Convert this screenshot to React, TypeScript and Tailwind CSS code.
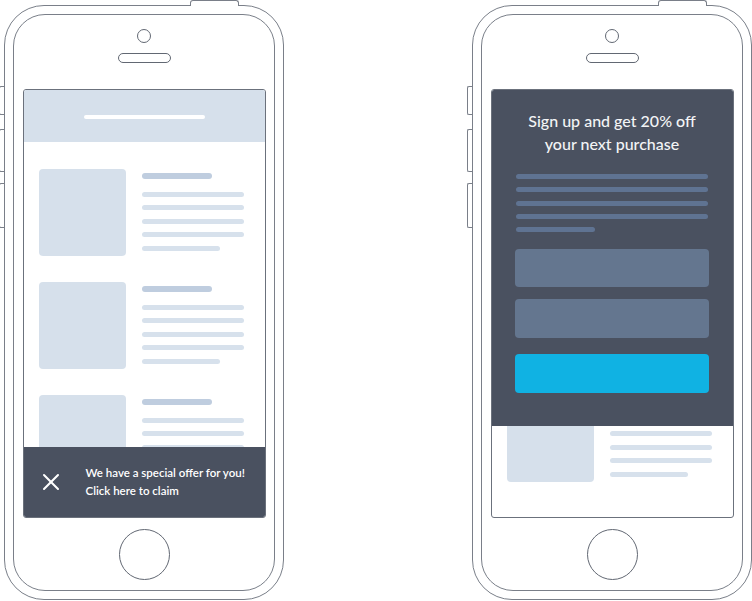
import { X } from "lucide-react";

function ListItem() {
  return (
    <div className="flex gap-[16px]">
      <div className="h-[87px] w-[87px] shrink-0 rounded-[4px] bg-[#d6e0eb]" />
      <div className="flex flex-col pt-[4px]">
        <div className="h-[6px] w-[70px] rounded-full bg-[#bfcddf]" />
        <div className="mt-[13px] flex flex-col gap-[8.4px]">
          <div className="h-[5px] w-[102px] rounded-full bg-[#d7e1ec]" />
          <div className="h-[5px] w-[102px] rounded-full bg-[#d7e1ec]" />
          <div className="h-[5px] w-[102px] rounded-full bg-[#d7e1ec]" />
          <div className="h-[5px] w-[102px] rounded-full bg-[#d7e1ec]" />
          <div className="h-[5px] w-[78px] rounded-full bg-[#d7e1ec]" />
        </div>
      </div>
    </div>
  );
}

function ScreenContent() {
  return (
    <>
      <div className="flex h-[52px] shrink-0 items-start justify-center bg-[#d6e0eb] pt-[25px]">
        <div className="h-[4px] w-[121px] rounded-full bg-white" />
      </div>
      <div className="flex flex-col gap-[26px] px-[15px] pt-[27px]">
        <ListItem />
        <ListItem />
        <ListItem />
      </div>
    </>
  );
}

function Phone({ children }: { children: React.ReactNode }) {
  return (
    <div className="relative h-[595px] w-[280px] shrink-0 rounded-[40px] border border-[#7a7f89] bg-white p-[8px]">
      {/* top button */}
      <div className="absolute -top-[6px] left-[185px] h-[6px] w-[49px] rounded-t-[3px] border-x border-t border-[#7a7f89] bg-white" />
      {/* side buttons */}
      <div className="absolute left-[-6px] top-[80px] h-[29px] w-[5px] rounded-l-[2px] border-y border-l border-[#7a7f89]" />
      <div className="absolute left-[-6px] top-[123px] h-[43px] w-[5px] rounded-l-[2px] border-y border-l border-[#7a7f89]" />
      <div className="absolute left-[-6px] top-[177px] h-[45px] w-[5px] rounded-l-[2px] border-y border-l border-[#7a7f89]" />

      <div className="flex h-full flex-col items-center rounded-[32px] border border-[#7a7f89]">
        <div className="mt-[14px] h-[14px] w-[14px] rounded-full border border-[#626873]" />
        <div className="mt-[10px] h-[10px] w-[53px] rounded-full border border-[#626873]" />
        <div className="relative mt-[26px] h-[429px] w-[243px] shrink-0 overflow-hidden rounded-[3px] border border-[#6b717c] bg-white">
          {children}
        </div>
        <div className="mt-[11px] h-[51px] w-[51px] rounded-full border border-[#626873]" />
      </div>
    </div>
  );
}

export default function App() {
  return (
    <div className="flex h-[601px] w-[752px] gap-[188px] overflow-hidden bg-white pl-[4px] pt-[5px] font-['Lato',_'Noto_Sans',_sans-serif]">
      <Phone>
        <ScreenContent />
        <div className="absolute inset-x-0 bottom-0 flex h-[70px] items-center bg-[#4a5160]">
          <X size={28} strokeWidth={1.75} className="ml-[13px] text-white" />
          <div className="ml-[21px] text-[11.5px] font-semibold leading-[18px] text-white">
            <p>We have a special offer for you!</p>
            <p>Click here to claim</p>
          </div>
        </div>
      </Phone>

      <Phone>
        <ScreenContent />
        <div className="absolute -inset-x-px -top-px flex h-[337px] flex-col items-center rounded-t-[3px] bg-[#4a5160] pt-[20px]">
          <h2 className="text-center text-[16px] font-medium leading-[23px] text-[#f3f4f6]">
            Sign up and get 20% off
            <br />
            your next purchase
          </h2>
          <div className="mt-[19px] flex w-[192px] flex-col gap-[8.3px]">
            <div className="h-[5px] w-[192px] rounded-full bg-[#5f7392]" />
            <div className="h-[5px] w-[192px] rounded-full bg-[#5f7392]" />
            <div className="h-[5px] w-[192px] rounded-full bg-[#5f7392]" />
            <div className="h-[5px] w-[192px] rounded-full bg-[#5f7392]" />
            <div className="h-[5px] w-[79px] rounded-full bg-[#5f7392]" />
          </div>
          <div className="mt-[17px] h-[38px] w-[194px] rounded-[4px] bg-[#64768f]" />
          <div className="mt-[12px] h-[39px] w-[194px] rounded-[4px] bg-[#64768f]" />
          <div className="mt-[16px] h-[39px] w-[194px] rounded-[4px] bg-[#10b2e3]" />
        </div>
      </Phone>
    </div>
  );
}
